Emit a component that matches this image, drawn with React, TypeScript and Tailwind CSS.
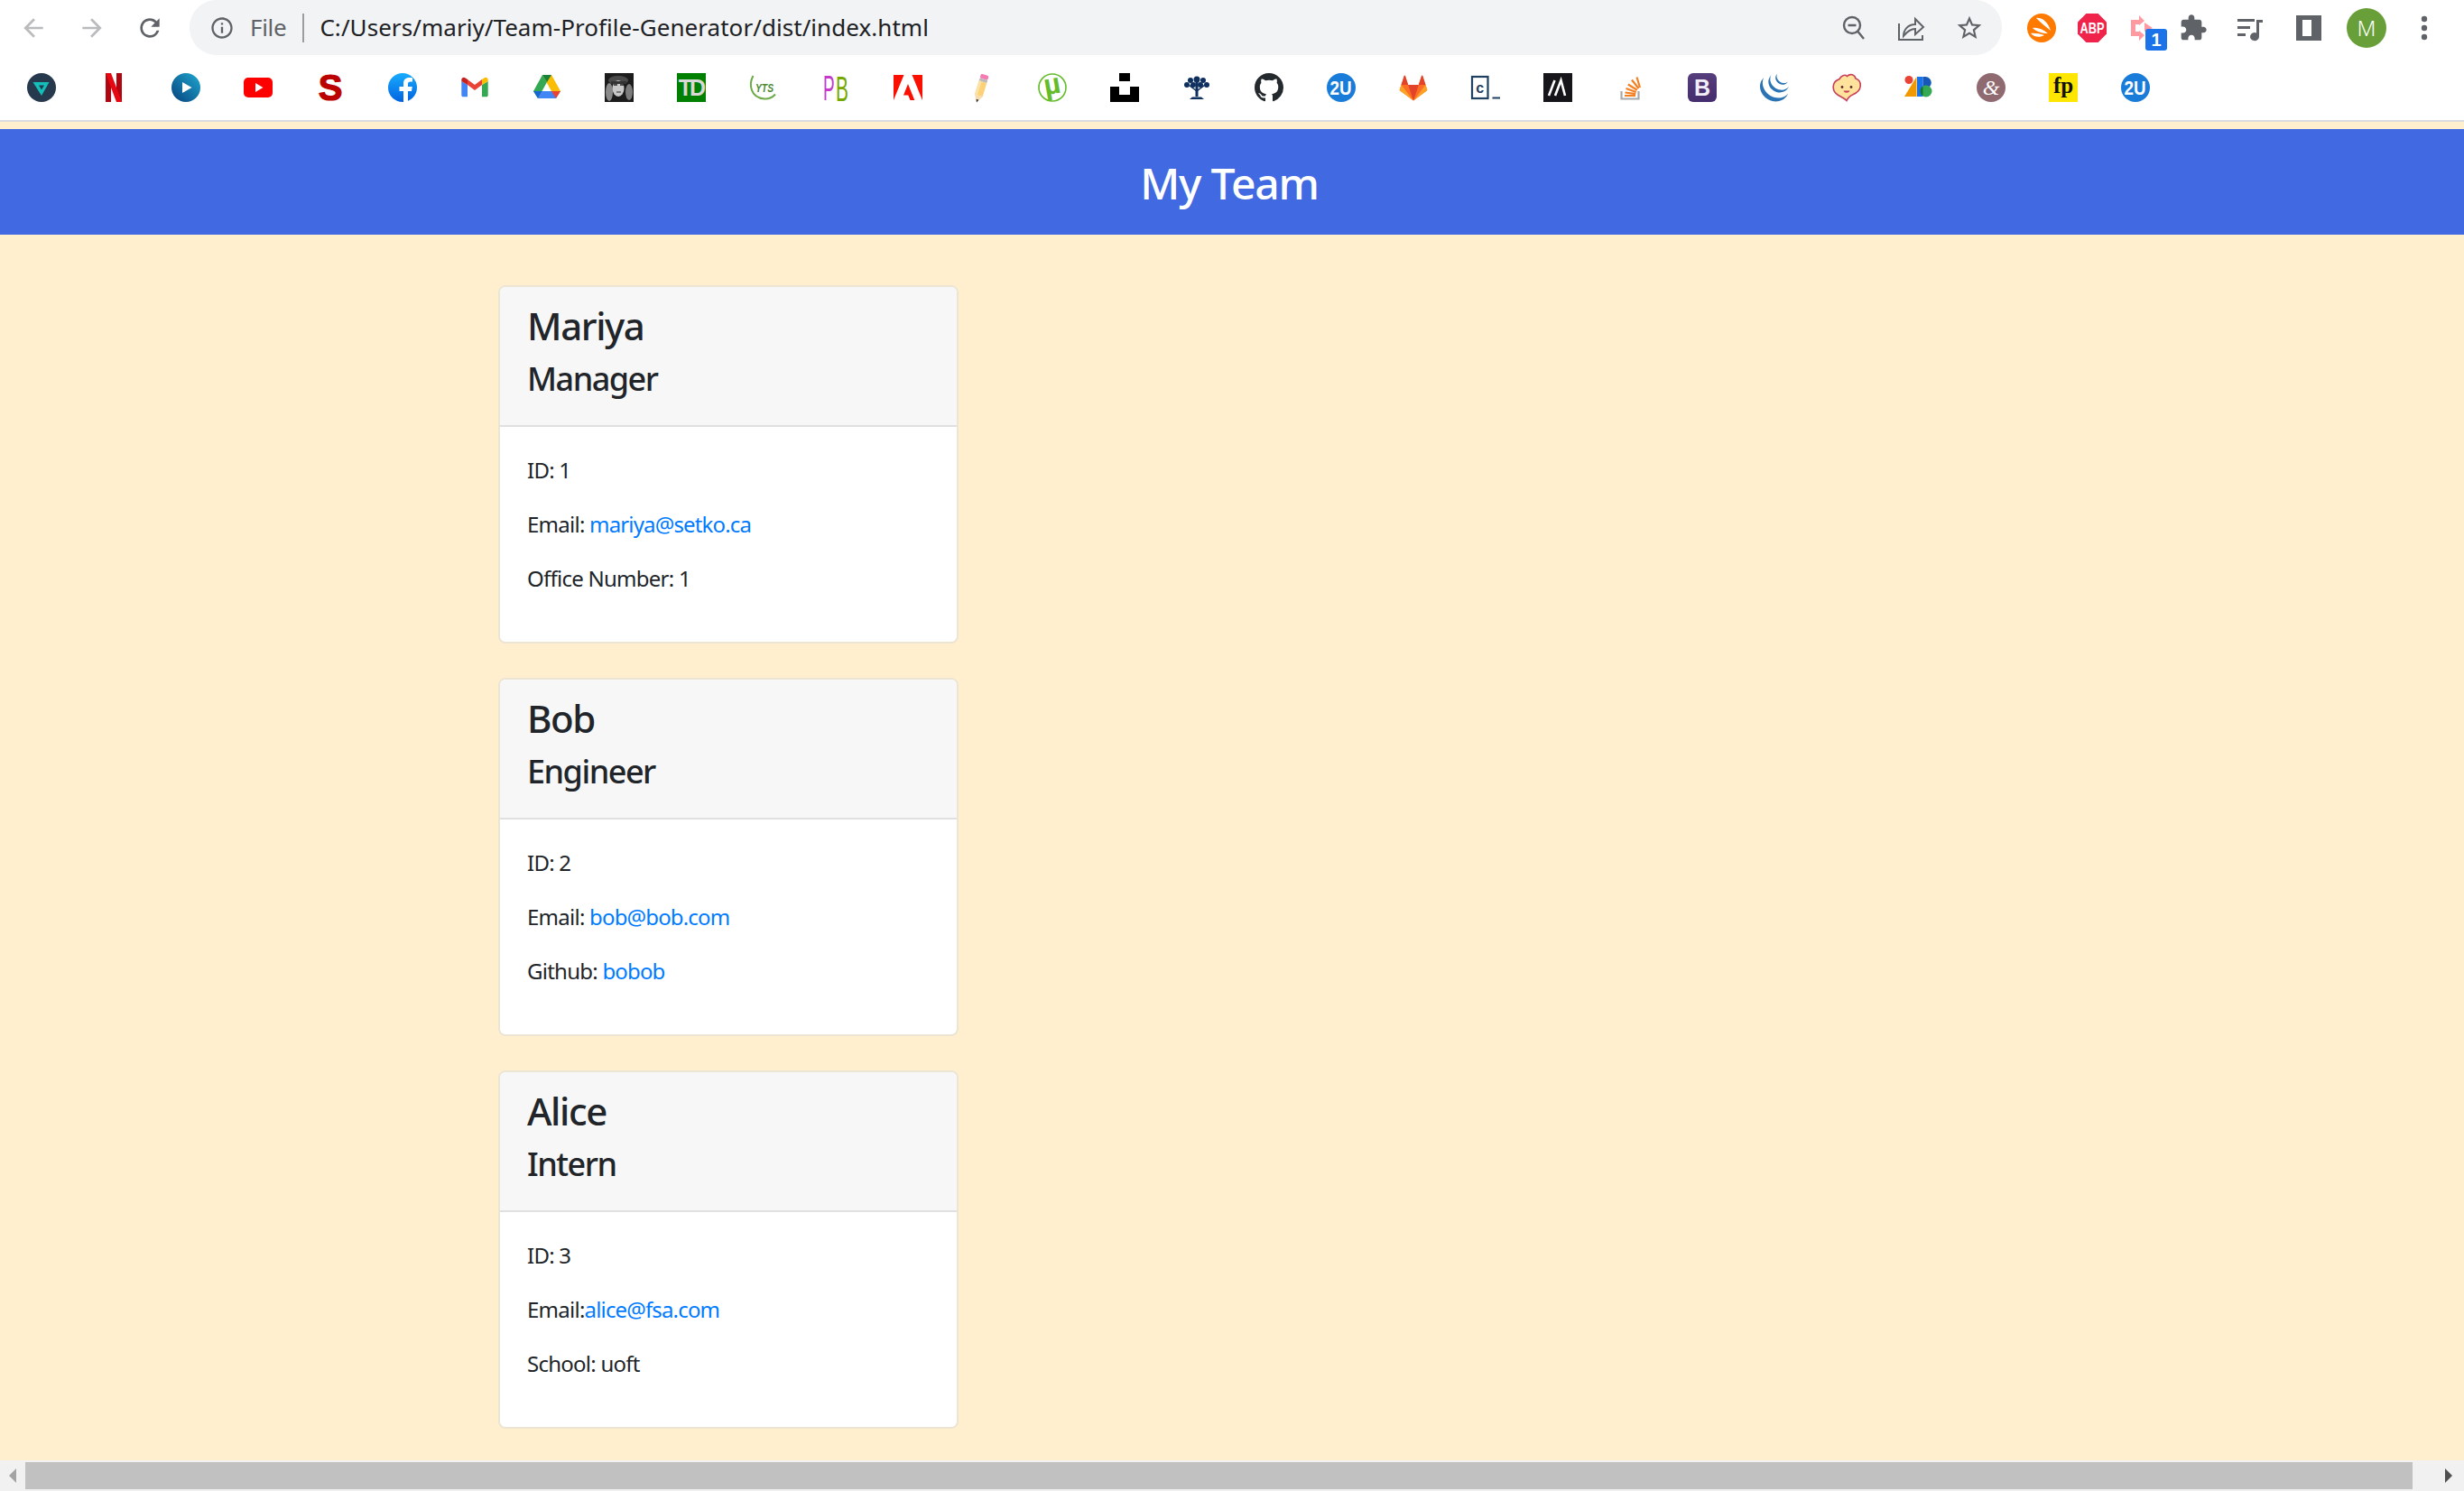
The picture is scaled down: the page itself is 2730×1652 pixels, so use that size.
import React from "react";
import { SiJquery } from "react-icons/si";

type P = { children: React.ReactNode };
const Ico = ({ children }: P) => (
  <svg viewBox="0 0 32 32" className="w-8 h-8 shrink-0 overflow-visible">{children}</svg>
);
const Mat = ({ d, cls }: { d: string; cls: string }) => (
  <svg viewBox="0 0 24 24" className={cls} fill="currentColor"><path d={d} /></svg>
);
const sans = "Liberation Sans, sans-serif";
const serif = "Liberation Serif, serif";

const TwoU = () => (
  <Ico>
    <circle cx="16" cy="16" r="16" fill="#1a7cd9" />
    <text x="15.500" y="23.500" textAnchor="middle" fontFamily={sans} fontWeight="700" fontSize="22" textLength="24" lengthAdjust="spacingAndGlyphs" fill="#fff">2U</text>
  </Ico>
);

const bookmarks: React.ReactNode[] = [
  <Ico key="a">
    <circle cx="16" cy="16" r="16" fill="#26394d" />
    <path d="M6.500 10h18L16 25z" fill="#13bfb8" />
    <path d="M13 13.500h6L16 18.500z" fill="#26394d" />
  </Ico>,
  <Ico key="b">
    <path d="M7 0h6v32l-6 0z" fill="#b1060f" />
    <path d="M19 0h6v32h-6z" fill="#b1060f" />
    <path d="M7 0h6l12 32h-6z" fill="#e50914" />
  </Ico>,
  <Ico key="c">
    <defs><linearGradient id="g1" x1="1" y1="0" x2="0" y2="1"><stop offset="0" stopColor="#1fa8d0" /><stop offset="1" stopColor="#07417c" /></linearGradient></defs>
    <circle cx="16" cy="16" r="16" fill="url(#g1)" />
    <path d="M12 10l10.500 6L12 22z" fill="#fff" />
  </Ico>,
  <Ico key="d">
    <rect x="0" y="5" width="32" height="22" rx="5" fill="#ff0000" />
    <path d="M13 11l8.500 5L13 21z" fill="#fff" />
  </Ico>,
  <Ico key="e">
    <text x="16" y="30" textAnchor="middle" fontFamily={sans} fontWeight="700" fontSize="40" stroke="#bb0000" strokeWidth="1.200" fill="#bb0000">S</text>
  </Ico>,
  <Ico key="f">
    <defs><linearGradient id="g2" x1="0" y1="0" x2="0" y2="1"><stop offset="0" stopColor="#18acfe" /><stop offset="1" stopColor="#0163e0" /></linearGradient></defs>
    <circle cx="16" cy="16" r="16" fill="url(#g2)" />
    <path d="M22 32V20h4l.8-5H22v-3c0-1.500.7-2.600 2.800-2.600H27V5.200C26 5 24.600 4.900 23.300 4.900c-3.800 0-6.300 2.300-6.300 6.600V15h-4.500v5H17v12z" fill="#fff" />
  </Ico>,
  <Ico key="g">
    <path d="M1.300 9v15.500c0 1 .8 1.800 1.800 1.800H8V13z" fill="#4285f4" />
    <path d="M24 13v13.300h4.900c1 0 1.800-.8 1.800-1.800V9z" fill="#34a853" />
    <path d="M24 13l6.700-4V7.500c0-2.400-2.700-3.400-4.400-2.100L24 7z" fill="#fbbc04" />
    <path d="M8 13L16 19l8-6V7l-8 6-8-6z" fill="#ea4335" />
    <path d="M1.300 7.500V9L8 13V7L5.700 5.400C4 4.100 1.300 5.100 1.300 7.500z" fill="#c5221f" />
  </Ico>,
  <Ico key="h">
    <path d="M11 2h10l10 18H21z" fill="#fbbc04" />
    <path d="M11 2L1 20l5 8 10-18z" fill="#34a853" />
    <path d="M6 28h20l5-8H11z" fill="#4285f4" />
    <path d="M1 20l5 8 5-8z" fill="#1967d2" />
    <path d="M26 28l5-8h-10z" fill="#ea4335" />
    <path d="M11 2h10l-5 8z" fill="#188038" />
  </Ico>,
  <Ico key="i">
    <rect width="32" height="32" fill="#1c1c1c" />
    <ellipse cx="5" cy="21" rx="4" ry="10" fill="#8a8a8a" />
    <ellipse cx="27" cy="21" rx="4" ry="9" fill="#7c7c7c" />
    <ellipse cx="15" cy="8" rx="11" ry="5" fill="#4a4a4a" />
    <ellipse cx="15" cy="17" rx="6.500" ry="9" fill="#c8c8c8" />
    <path d="M10 13h4M17 13h4" stroke="#222" strokeWidth="1.600" />
    <path d="M13 21h5" stroke="#444" strokeWidth="1.200" />
    <rect x="7" y="9" width="17" height="3" fill="#333" />
  </Ico>,
  <Ico key="j">
    <rect width="32" height="32" fill="#008000" />
    <text x="15.500" y="25" textAnchor="middle" fontFamily={sans} fontWeight="700" fontSize="25" letterSpacing="-3" fill="#d8d8d8">TD</text>
  </Ico>,
  <Ico key="k">
    <path d="M4.500 3C-.5 12 1 27 17 28.500c5 .3 9-1.700 12-5" fill="none" stroke="#6cab45" strokeWidth="2" />
    <text x="17" y="21" textAnchor="middle" fontFamily={sans} fontWeight="700" fontStyle="italic" fontSize="13.500" textLength="20" lengthAdjust="spacingAndGlyphs" fill="#4a8a2f">YTS</text>
  </Ico>,
  <Ico key="l">
    <text transform="translate(2 30) scale(0.5 1)" fontFamily={sans} fontSize="38" fill="#c63ac9">P</text>
    <text transform="translate(16 31) scale(0.55 1)" fontFamily={sans} fontSize="38" fill="#76a800">B</text>
  </Ico>,
  <Ico key="m">
    <path d="M0 2h11.500L0 30zM20.500 2H32v28z" fill="#fa0f00" />
    <path d="M16 12l7.300 18h-4.800l-2.200-5.500h-5.300z" fill="#fa0f00" />
  </Ico>,
  <Ico key="n">
    <g transform="rotate(17 16 16)">
      <rect x="12.500" y="1" width="9" height="5" rx="1.500" fill="#f47bb3" />
      <rect x="12.500" y="6" width="9" height="3" fill="#b9b9b9" />
      <rect x="12.500" y="9" width="9" height="16" fill="#fdd178" />
      <rect x="12.500" y="9" width="3" height="16" fill="#fbe2a7" />
      <path d="M12.500 25h9L17 33z" fill="#f7dcae" />
      <path d="M15.500 29.500h3L17 33z" fill="#333" />
    </g>
  </Ico>,
  <Ico key="o">
    <circle cx="16" cy="16" r="15" fill="#fff" stroke="#64bc2a" strokeWidth="1.600" />
    <text x="16" y="23" textAnchor="middle" transform="rotate(-10 16 16)" fontFamily={sans} fontWeight="700" fontSize="32" fill="#64bc2a">µ</text>
  </Ico>,
  <Ico key="p">
    <path d="M10 0h12v9H10zM0 15h10v9h12v-9h10v17H0z" fill="#000" />
  </Ico>,
  <Ico key="q">
    <g fill="#0f2f5f">
      <circle cx="16" cy="7" r="3.500" /><circle cx="9" cy="8" r="3" /><circle cx="23" cy="8" r="3" />
      <circle cx="5" cy="13" r="3" /><circle cx="27" cy="13" r="3" /><circle cx="12" cy="13" r="3" /><circle cx="20" cy="13" r="3" />
      <path d="M14.500 10h3v16h-3z" />
      <path d="M15 20L7 14l1-1 8 6zM17 20l8-6-1-1-8 6z" />
      <path d="M11 26.500h10l3 2.500H8z" />
    </g>
  </Ico>,
  <Ico key="r">
    <svg x="0" y="0" width="32" height="32" viewBox="0 0 16 16">
      <path fill="#24292e" d="M8 0C3.580 0 0 3.580 0 8c0 3.540 2.290 6.530 5.470 7.590.4.070.55-.17.55-.38 0-.19-.01-.82-.01-1.490-2.010.37-2.530-.49-2.690-.94-.09-.23-.48-.94-.82-1.130-.28-.15-.68-.52-.01-.53.63-.01 1.080.58 1.230.82.72 1.210 1.870.87 2.330.66.070-.52.28-.87.51-1.070-1.780-.2-3.640-.89-3.640-3.950 0-.87.31-1.590.82-2.150-.08-.2-.36-1.020.08-2.120 0 0 .67-.21 2.200.82.64-.18 1.320-.27 2-.27.68 0 1.360.09 2 .27 1.530-1.040 2.200-.82 2.200-.82.44 1.100.16 1.920.08 2.120.51.56.82 1.270.82 2.150 0 3.070-1.870 3.750-3.650 3.950.29.25.54.73.54 1.480 0 1.070-.01 1.930-.01 2.200 0 .21.15.46.55.38A8.013 8.013 0 0 0 16 8c0-4.420-3.580-8-8-8z" />
    </svg>
  </Ico>,
  <TwoU key="s" />,
  <Ico key="t">
    <path d="M16 30.500L1.200 19.500c-.4-.3-.5-.8-.4-1.300L2.500 13l3.300-10c.2-.5.9-.5 1.100 0L10.200 13h11.600l3.300-10c.2-.5.9-.5 1.100 0l3.300 10 1.700 5.200c.1.500 0 1-.4 1.300z" fill="#fc6d26" />
    <path d="M16 30.500L10.200 13h11.600z" fill="#e24329" />
    <path d="M2.500 13L.8 18.200c-.1.500 0 1 .4 1.300L16 30.500z" fill="#fca326" />
    <path d="M29.500 13l1.700 5.200c.1.500 0 1-.4 1.300L16 30.500z" fill="#fca326" />
    <path d="M2.500 13h7.700L6.900 3c-.2-.5-.9-.5-1.100 0z" fill="#e24329" />
    <path d="M29.500 13h-7.700L25.100 3c.2-.5.9-.5 1.100 0z" fill="#e24329" />
  </Ico>,
  <Ico key="u">
    <rect x="1" y="4" width="17.500" height="24" fill="none" stroke="#1f4060" strokeWidth="2.200" />
    <text x="9.700" y="21.500" textAnchor="middle" fontFamily={sans} fontWeight="700" fontSize="16" fill="#1f4060">c</text>
    <rect x="23.500" y="26.500" width="8.500" height="2" fill="#1f4060" />
  </Ico>,
  <Ico key="v">
    <rect width="32" height="32" fill="#15151a" />
    <path d="M6 25L12.500 8M13 25L19.500 8L24 25" stroke="#fff" strokeWidth="2.600" fill="none" />
  </Ico>,
  <Ico key="w">
    <path d="M6.500 20v8.500h19V20" fill="none" stroke="#a8a9ac" strokeWidth="2.200" />
    <g stroke="#f48024" strokeWidth="2.200">
      <path d="M10 25h12M10.500 21.500l11.800 1.700M11.500 17l11.300 4M13.800 12.500l10 6.300M18 7.500l7.500 9.500M23.500 4.500l3.500 11.500" />
    </g>
  </Ico>,
  <Ico key="x">
    <defs><linearGradient id="g3" x1="0" y1="0" x2="0" y2="1"><stop offset="0" stopColor="#563d7c" /><stop offset="1" stopColor="#452c6c" /></linearGradient></defs>
    <rect width="32" height="32" rx="6" fill="url(#g3)" />
    <text x="16" y="25" textAnchor="middle" fontFamily={sans} fontWeight="700" fontSize="25" fill="#f2eef7">B</text>
  </Ico>,
  <SiJquery key="y" className="w-8 h-8 shrink-0 text-[#2a74b5]" />,
  <Ico key="z">
    <path d="M16 30.500c-2-2.500-6-3.700-10-6.500C1.500 21 .6 16 1.800 12 3 8 6 8 8 6.500 10 3 14 .8 16.500 3.500 20-.2 25 2 26 6c3.500 1 5.500 4 5.200 8.500-.4 5-4 7.500-8.200 9.300-3 1.200-5.500 3.700-7 6.700z" fill="#ffe39c" stroke="#c9405a" strokeWidth="1.600" />
    <circle cx="11" cy="15.500" r="1.400" fill="#5c2a2a" /><circle cx="21" cy="15.500" r="1.400" fill="#5c2a2a" />
    <path d="M12.500 19.500c1 3 6 3 7 0z" fill="#c9405a" />
  </Ico>,
  <Ico key="aa">
    <circle cx="5" cy="7.500" r="4.500" fill="#ea4335" />
    <path d="M0 26L13.500 4v22z" fill="#f29900" />
    <path d="M14 4h6.500v22H14z" fill="#1a73e8" />
    <path d="M20.500 4h2.800a6.500 6.500 0 0 1 0 13h-2.800z" fill="#1558b8" />
    <circle cx="24" cy="20" r="6.500" fill="#34a853" />
    <path d="M20.500 14.500A6.500 6.500 0 0 0 20.500 25.500z" fill="#137333" />
  </Ico>,
  <Ico key="ab">
    <circle cx="16" cy="16" r="16" fill="#8f6a70" />
    <text x="16" y="24" textAnchor="middle" fontFamily={serif} fontStyle="italic" fontSize="24" fill="#fff">&amp;</text>
  </Ico>,
  <Ico key="ac">
    <rect width="32" height="32" fill="#ffe600" />
    <text x="16" y="22" textAnchor="middle" fontFamily={serif} fontWeight="700" fontSize="25" fill="#111">fp</text>
  </Ico>,
  <TwoU key="ad" />,
];

const team = [
  { name: "Mariya", role: "Manager", id: "1", sep: "Email: ", email: "mariya@setko.ca", label: "Office Number: ", value: "1", link: false },
  { name: "Bob", role: "Engineer", id: "2", sep: "Email: ", email: "bob@bob.com", label: "Github: ", value: "bobob", link: true },
  { name: "Alice", role: "Intern", id: "3", sep: "Email:", email: "alice@fsa.com", label: "School: ", value: "uoft", link: false },
];

const Card = ({ m }: { m: (typeof team)[number] }) => (
  <div className="w-[510px] h-[397px] bg-white border-2 border-[#ece5d4] rounded-[8px] overflow-hidden flex flex-col text-[#212529]">
    <div className="h-[155px] shrink-0 bg-[#f7f7f7] border-b-2 border-[#e0e0e0] px-[30px] pt-[18px]">
      <h3 className="text-[42px] leading-[50px] font-[530] tracking-[-1.4px] mb-[12px]">{m.name}</h3>
      <h4 className="text-[36px] leading-[43px] font-[530] tracking-[-1.5px]">{m.role}</h4>
    </div>
    <div className="px-[30px] pt-[30px] text-[24px] leading-[36px] tracking-[-0.75px]">
      <p className="mb-[24px]">ID: {m.id}</p>
      <p className="mb-[24px]">{m.sep}<a className="text-[#007bff] tracking-[-0.85px]">{m.email}</a></p>
      <p className="mb-[24px]">{m.label}{m.link ? <a className="text-[#007bff] tracking-[-0.85px]">{m.value}</a> : m.value}</p>
    </div>
  </div>
);

export default function App() {
  return (
    <div className="w-[2730px] h-[1652px] overflow-hidden flex flex-col bg-[#ffefcf] font-['Noto_Sans','Liberation_Sans',sans-serif]">
      <div className="h-[61px] shrink-0 bg-white flex items-center pl-[21px] text-[#5f6368]">
        <Mat cls="w-8 h-8 text-[#b9bbbd]" d="M20 11H7.830l5.590-5.590L12 4l-8 8 8 8 1.410-1.410L7.830 13H20v-2z" />
        <Mat cls="w-8 h-8 ml-[33px] text-[#b9bbbd]" d="M12 4l-1.410 1.410L16.170 11H4v2h12.170l-5.580 5.590L12 20l8-8z" />
        <Mat cls="w-8 h-8 ml-[32px]" d="M17.650 6.350A7.958 7.958 0 0 0 12 4c-4.420 0-7.990 3.580-7.990 8s3.570 8 7.990 8c3.730 0 6.840-2.550 7.730-6h-2.080A5.990 5.990 0 0 1 12 18c-3.310 0-6-2.690-6-6s2.690-6 6-6c1.660 0 3.140.69 4.220 1.780L13 11h7V4l-2.350 2.350z" />
        <div className="ml-[28px] w-[2008px] h-[61px] rounded-[30px] bg-[#f1f3f4] flex items-center pl-[22px] pr-[20px]">
          <Mat cls="w-7 h-7" d="M11 7h2v2h-2zm0 4h2v6h-2zm1-9C6.480 2 2 6.480 2 12s4.480 10 10 10 10-4.480 10-10S17.520 2 12 2zm0 18c-4.410 0-8-3.590-8-8s3.590-8 8-8 8 3.590 8 8-3.590 8-8 8z" />
          <span className="ml-[17px] text-[26px] tracking-[-0.3px] text-[#5f6368]">File</span>
          <div className="ml-[18px] w-[2px] h-[32px] bg-[#9a9ea3]" />
          <span className="ml-[17px] text-[26px] tracking-[0.05px] text-[#202124]">C:/Users/mariy/Team-Profile-Generator/dist/index.html</span>
          <svg viewBox="0 0 28 28" className="w-7 h-7 ml-auto" fill="none" stroke="currentColor" strokeWidth="2.400">
            <circle cx="12" cy="11" r="9" /><path d="M7.500 11h9M18.500 18l6.500 8" />
          </svg>
          <svg viewBox="0 0 32 32" className="w-8 h-8 ml-[33px]" fill="none" stroke="currentColor" strokeWidth="2">
            <path d="M3 11v18h26v-5" /><path d="M8 25c0-7 5-13 13-13V6l9 9-9 8v-6c-5 0-9 3-13 8z" />
          </svg>
          <Mat cls="w-8 h-8 ml-[33px]" d="M22 9.240l-7.190-.62L12 2 9.190 8.630 2 9.240l5.460 4.730L5.820 21 12 17.270 18.180 21l-1.630-7.030L22 9.240zM12 15.400l-3.760 2.270 1-4.280-3.320-2.880 4.380-.38L12 6.100l1.710 4.040 4.380.38-3.320 2.880 1 4.280L12 15.400z" />
        </div>
        <div className="ml-[28px] shrink-0">
          <Ico>
            <circle cx="16" cy="16" r="16" fill="#ff7a00" />
            <path d="M10 5c6-1 13 4 16 14-5-4-11-9-16-14zM6 16c5-1 11 1 17 6-6 0-13-2-17-6zM4 22c5-.5 10 .5 15 2-5 3-12 2-15-2z" fill="#fff" />
          </Ico>
        </div>
        <div className="ml-[24px] shrink-0">
          <Ico>
            <path d="M9.400 0h13.200L32 9.400v13.200L22.600 32H9.400L0 22.600V9.400z" fill="#f0244b" />
            <text x="16" y="22" textAnchor="middle" fontFamily={sans} fontWeight="700" fontSize="17" textLength="27" lengthAdjust="spacingAndGlyphs" fill="#fff">ABP</text>
          </Ico>
        </div>
        <div className="ml-[23px] shrink-0 relative w-8 h-8">
          <Ico>
            <path d="M4 7h9v5H9v8h4v5H4z" fill="#ff9aa0" />
            <path d="M13 2l6 6-6 5zM13 19l6 5-6 6zM19 10l9 6-9 4z" fill="#ff9aa0" />
          </Ico>
          <div className="absolute left-[20px] top-[17px] w-[24px] h-[24px] rounded-[3px] bg-[#1a73e8] flex items-center justify-center text-white text-[20px] font-bold font-['Liberation_Sans',sans-serif]">1</div>
        </div>
        <Mat cls="w-8 h-8 ml-[25px] shrink-0" d="M20.500 11H19V7c0-1.100-.9-2-2-2h-4V3.500C13 2.120 11.880 1 10.500 1S8 2.120 8 3.500V5H4c-1.100 0-1.990.9-1.990 2v3.800H3.500c1.490 0 2.700 1.210 2.700 2.700s-1.210 2.700-2.700 2.700H2V20c0 1.100.9 2 2 2h3.800v-1.500c0-1.490 1.210-2.700 2.700-2.700 1.490 0 2.700 1.210 2.700 2.700V22H17c1.100 0 2-.9 2-2v-4h1.500c1.380 0 2.500-1.120 2.500-2.500S21.880 11 20.500 11z" />
        <svg viewBox="0 0 32 32" className="w-8 h-8 ml-[31px] shrink-0" fill="currentColor">
          <path d="M2 6h19v3H2zM2 14h14v3H2zM2 22h9v3H2z" />
          <path d="M23 7h7v3h-4v15.500a5 4.500 0 1 1-3-4z" />
        </svg>
        <svg viewBox="0 0 32 32" className="w-8 h-8 ml-[33px] shrink-0" fill="currentColor">
          <path fillRule="evenodd" d="M2 2h28v28H2zM9 7v18h10V7z" />
        </svg>
        <div className="ml-[26px] w-[44px] h-[44px] shrink-0 rounded-full bg-[#689f38] flex items-center justify-center text-white text-[24px] font-light">M</div>
        <svg viewBox="0 0 32 32" className="w-8 h-8 ml-[26px] shrink-0" fill="currentColor">
          <circle cx="16" cy="6" r="3.200" /><circle cx="16" cy="16" r="3.200" /><circle cx="16" cy="26" r="3.200" />
        </svg>
      </div>

      <div className="h-[72px] shrink-0 bg-white flex items-center pl-[30px] gap-12">{bookmarks}</div>
      <div className="h-[2px] shrink-0 bg-[#dadce0]" />

      <div className="flex-1 min-h-0 pt-[8px] overflow-hidden">
        <header className="h-[117px] bg-[#4169e1] flex items-center justify-center pr-[6px] pt-[2px] text-white text-[48px] font-[530] tracking-[-1.2px]">My Team</header>
        <main className="ml-[552px] mt-[56px] flex flex-col gap-[38px]">
          {team.map((m) => <Card key={m.name} m={m} />)}
        </main>
      </div>

      <div className="h-[34px] shrink-0 bg-[#f1f1f1] flex items-center">
        <div className="w-[28px] flex items-center justify-center">
          <svg viewBox="0 0 8 16" className="w-2 h-4"><path d="M8 0v16L0 8z" fill="#a3a3a3" /></svg>
        </div>
        <div className="w-[2645px] h-[30px] bg-[#c1c1c1]" />
        <div className="w-[57px] flex items-center justify-center pl-[23px]">
          <svg viewBox="0 0 8 16" className="w-2 h-4"><path d="M0 0v16l8-8z" fill="#505050" /></svg>
        </div>
      </div>
    </div>
  );
}
